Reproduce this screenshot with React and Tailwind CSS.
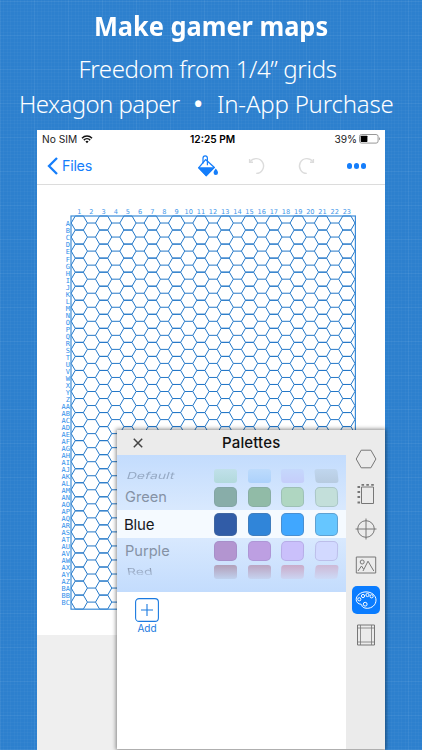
import clsx from 'clsx';

const COLS = 23;
const ROWS = 28;
const HEX_H = 14.04;
const SIDE = 8.107;
const STEP = SIDE * 1.5;

// Labels run A..Z, AA..AZ, BA..BC
const rowLabels = Array.from({ length: 55 }, (_, i) => {
  const last = String.fromCharCode(65 + (i % 26));
  return i < 26 ? last : String.fromCharCode(64 + Math.floor(i / 26)) + last;
});

const rows = [
  {
    name: 'Default',
    row: 'h-[14px] mt-[14px]',
    text: 'text-[14px] pl-[10px] text-[#8093ad] opacity-70 scale-y-[0.68] -skew-x-12',
    swatch: 'h-[14px] rounded-[3px]',
    colors: ['bg-linear-to-b from-[#c0e0ea] to-[#b2d9dc]', 'bg-linear-to-b from-[#bddbfc] to-[#acd1fb]', 'bg-linear-to-b from-[#c5d8fc] to-[#c5cdfa] skew-x-3', 'bg-linear-to-b from-[#c0d6ee] to-[#b7cbe0] skew-x-6'],
  },
  {
    name: 'Green',
    row: 'h-[20px] mt-[4px] mb-[3px]',
    text: 'text-[14.6px] pl-[8px] text-[#8592a5]',
    swatch: 'h-[20px] rounded-[5px] border border-[#7a99a0]/35',
    colors: ['bg-[#88ada9]', 'bg-[#91bba7]', 'bg-[#afd6c1] skew-x-1', 'bg-[#c3dfda] skew-x-2'],
  },
  {
    name: 'Blue',
    row: 'h-[28px] bg-[#f5faff]',
    text: 'text-[15px] pl-[7px] tracking-[-0.2px] text-[#15181c]',
    swatch: 'h-[23px] rounded-[5px] border border-[#55749c]/45',
    colors: ['bg-[#315ca7]', 'bg-[#3085d9]', 'bg-[#40a7ff]', 'bg-[#66c6ff]'],
  },
  {
    name: 'Purple',
    row: 'h-[20px] mt-[3px] mb-[4px]',
    text: 'text-[14.6px] pl-[8px] text-[#8592a5]',
    swatch: 'h-[20px] rounded-[5px] border border-[#8a82b8]/30',
    colors: ['bg-[#b395d0]', 'bg-[#bd9fe2]', 'bg-[#cac0fb] -skew-x-1', 'bg-[#d2d9ff] -skew-x-2'],
  },
  {
    name: 'Red',
    row: 'h-[14px]',
    text: 'text-[14px] pl-[10px] text-transparent bg-linear-to-b from-[#8796ae] to-[#b4c8e4] bg-clip-text scale-y-[0.68] skew-x-6',
    swatch: 'h-[14px] rounded-[3px]',
    colors: ['bg-linear-to-b from-[#b29fb9] to-[#bfd1ee]', 'bg-linear-to-b from-[#bba5c2] to-[#c5d3f0]', 'bg-linear-to-b from-[#c9abc9] to-[#cbd5f3] -skew-x-3', 'bg-linear-to-b from-[#cdb9d6] to-[#ccdaf7] -skew-x-6'],
  },
];

function hexPath() {
  let d = '';
  for (let c = 0; c < COLS; c++) {
    const cx = SIDE + c * STEP;
    const odd = c % 2 === 1;
    const count = odd ? ROWS - 1 : ROWS;
    const top = odd ? HEX_H / 2 : 0;
    for (let r = 0; r < count; r++) {
      const y = top + r * HEX_H;
      const m = y + HEX_H / 2;
      const b = y + HEX_H;
      if (odd) {
        d += `M${cx - SIDE / 2} ${y}H${cx + SIDE / 2}`;
        if (r === count - 1) d += `M${cx - SIDE / 2} ${b}H${cx + SIDE / 2}`;
      } else {
        d += `M${cx - SIDE / 2} ${y}H${cx + SIDE / 2}L${cx + SIDE} ${m}L${cx + SIDE / 2} ${b}H${cx - SIDE / 2}L${cx - SIDE} ${m}Z`;
      }
    }
  }
  return d;
}

function HexMap() {
  return (
    <svg viewBox="37 185 348 450" className="block h-[450px] w-[348px]">
      <g fill="#3f97ea" fontFamily="'DejaVu Sans', sans-serif" fontSize="6.6" textAnchor="middle">
        {Array.from({ length: COLS }, (_, i) => (
          <text key={i} x={79.3 + i * STEP} y="214">{i + 1}</text>
        ))}
      </g>
      <g fill="#2f8eea" fontFamily="'DejaVu Sans Mono', monospace" fontSize="7" textAnchor="end">
        {rowLabels.map((label, i) => (
          <text key={label} x="70" y={226.4 + i * 7.02}>{label}</text>
        ))}
      </g>
      <g fill="none" stroke="#2478c8">
        <path d={hexPath()} transform="translate(71.2 216)" strokeWidth="1" />
        <rect x="71" y="216" width="284.4" height="393.2" stroke="#3c8cd8" strokeWidth="1.2" />
      </g>
    </svg>
  );
}

function StatusBar() {
  return (
    <div className="flex h-[18px] items-center pt-px pl-[5px] pr-[4px] text-[10.2px] text-[#1b1b1b]">
      <div className="flex w-[148px] items-center gap-[4px]">
        <span>No SIM</span>
        <svg viewBox="0 0 12 9" className="h-[9px] w-[12px]" fill="none" stroke="#111" strokeWidth="1.5">
          <path d="M1 3.2C3.8.4 8.2.4 11 3.2" />
          <path d="M2.8 5.1c1.8-1.8 4.6-1.8 6.4 0" />
          <path d="M4.4 6.6 6 8.3l1.6-1.7a2.3 2.3 0 0 0-3.2 0Z" fill="#111" stroke="none" />
        </svg>
      </div>
      <span className="w-[48px] whitespace-nowrap font-semibold text-black">12:25 PM</span>
      <div className="ml-auto flex items-center gap-[2px]">
        <span>39%</span>
        <svg viewBox="0 0 22 10" className="h-[10px] w-[22px]">
          <rect x=".5" y=".5" width="18.6" height="8.6" rx="2" fill="#fff" stroke="#8c8c8c" strokeWidth=".9" />
          <rect x="1.7" y="1.7" width="6.7" height="6.2" rx=".6" fill="#000" />
          <path d="M20.2 3.3c1.2.3 1.2 2.7 0 3Z" fill="#8c8c8c" />
        </svg>
      </div>
    </div>
  );
}

function NavBar() {
  return (
    <div className="flex h-[37px] items-center border-b border-[#dcdcdc] pl-[10px] pr-[19px]">
      <div className="flex w-[150px] items-center gap-[4px] text-[14.3px] text-[#157efb]">
        <svg viewBox="0 0 11 18" className="h-[18px] w-[11px]" fill="none" stroke="#157efb" strokeWidth="2.3">
          <path d="M10 1 2 9l8 8" />
        </svg>
        <span className="tracking-[-0.25px]">Files</span>
      </div>
      <svg viewBox="0 0 22 22" className="h-[22px] w-[22px]" fill="#157efb">
        <path d="M8.6 4.6 17.4 12.4 9.2 20.6 1.6 12.8Z" fill="#fff" stroke="#157efb" strokeWidth="1.3" strokeLinejoin="round" />
        <path d="M1 12.2h17l-8.8 9.3Z" />
        <path d="M6 8.5V3.2c0-3.2 4.4-3.2 4.4 0v7" fill="none" stroke="#157efb" strokeWidth="1.2" />
        <path d="M18.8 13.4c1.4 1.9 2.2 3 2.2 4.300a2.200 2.200 0 0 1-4.400 0c0-1.300.8-2.400 2.200-4.300Z" />
      </svg>
      {/* undo / redo */}
      <svg viewBox="0 0 18 18" className="ml-[29px] h-[18px] w-[18px]" fill="none" stroke="#dcdcdc" strokeWidth="1.4">
        <path d="M2.2 4.6A7.4 7.4 0 1 1 8.2 16.4" />
        <path d="M1.6 2v3.2h3.4" />
      </svg>
      <svg viewBox="0 0 18 18" className="ml-[31px] h-[18px] w-[18px]" fill="none" stroke="#dcdcdc" strokeWidth="1.4">
        <path d="M15.8 4.6A7.4 7.4 0 1 0 9.8 16.4" />
        <path d="M16.4 2v3.2h-3.4" />
      </svg>
      <div className="ml-auto flex gap-[1.5px]">
        <span className="size-[5.3px] rounded-full bg-[#157efb]" />
        <span className="size-[5.3px] rounded-full bg-[#157efb]" />
        <span className="size-[5.3px] rounded-full bg-[#157efb]" />
      </div>
    </div>
  );
}

function Picker() {
  return (
    <div className="flex h-[137px] flex-col overflow-hidden bg-linear-to-b from-[#c3dcfd] via-[#deecfe] to-[#c3dcfd]">
      {rows.map((r) => (
        <div key={r.name} className={clsx('flex shrink-0 items-center', r.row)}>
          <span className={clsx('w-[97px] leading-none', r.text)}>{r.name}</span>
          <div className="flex gap-[10.5px]">
            {r.colors.map((c) => (
              <span key={c} className={clsx('w-[23px]', r.swatch, c)} />
            ))}
          </div>
        </div>
      ))}
    </div>
  );
}

function ToolRail() {
  const icon = 'size-[22px]';
  return (
    <div className="flex w-[39px] flex-col items-center gap-[7.2px] bg-[#ebebeb] pt-[15px]">
      {[
        <svg key="hex" viewBox="0 0 22 22" className={icon}>
          <path d="M1.2 11 6.2 2.2h9.7l5 8.8-5 8.8H6.2Z" />
        </svg>,
        <svg key="edges" viewBox="0 0 22 22" className={icon}>
          <path d="M6.5 4h12v16.5h-12Z" />
          <path d="M6.5 1.8h2.6M11.3 1.8h2.6M16.2 1.8h2.6M2.5 4h2.6M2.5 9h2.6M2.5 14h2.6M2.5 19.5h2.6" strokeWidth="1.8" />
        </svg>,
        <svg key="target" viewBox="0 0 22 22" className={icon}>
          <circle cx="11" cy="11" r="8.3" />
          <path d="M.5 11h21M11 .5v21" />
        </svg>,
        <svg key="image" viewBox="0 0 22 22" className={icon}>
          <path d="M1.3 3h19.4v16H1.3Z" />
          <circle cx="7.2" cy="8" r="2" />
          <path d="m3 17 3.5-5 2 3M8 17l5-9.8 5.8 9.8" />
        </svg>,
        <svg key="palette" viewBox="0 0 22 22" className={icon}>
          <path d="M6.2 15.3c-3-.2-5-2.2-5-4.8 0-4 4.4-7.6 9.8-7.6 5.6 0 10 3.4 10 8.2 0 4.7-4 8.2-8.8 8.2-3.4 0-5.6-1.6-5.5-3.5Z" />
          <circle cx="4.3" cy="10.3" r="1.6" />
          <circle cx="8" cy="7" r="1.6" />
          <circle cx="12.5" cy="6" r="1.6" />
          <circle cx="16.6" cy="7.3" r="1.6" />
          <circle cx="10.2" cy="15.2" r="1.9" />
        </svg>,
        <svg key="margins" viewBox="0 0 22 22" className={icon}>
          <path d="M2.5 1h17v20h-17Z" />
          <path d="M5.5 1v20M16.5 1v20M2.5 4h17M2.5 18h17" strokeWidth=".8" />
        </svg>,
      ].map((item, i) => (
        <div
          key={item.key}
          className={clsx(
            'flex size-[28px] items-center justify-center rounded-[5px] fill-none',
            i === 4 ? 'bg-[#0a7cff] stroke-white' : 'stroke-[#777]'
          )}
        >
          {item}
        </div>
      ))}
    </div>
  );
}

export default function App() {
  return (
    <div className="flex h-[750px] w-[422px] flex-col items-center overflow-hidden bg-[#2d80ce] bg-[repeating-linear-gradient(0deg,rgba(255,255,255,0.025)_0_1px,transparent_1px_3.4px),repeating-linear-gradient(90deg,rgba(255,255,255,0.025)_0_1px,transparent_1px_3.4px),repeating-linear-gradient(0deg,rgba(255,255,255,0.04)_0_1px,transparent_1px_34px),repeating-linear-gradient(90deg,rgba(255,255,255,0.04)_0_1px,transparent_1px_34px)] font-['Inter','Liberation_Sans',sans-serif]">
      <div className="flex h-[130px] w-full shrink-0 flex-col items-center whitespace-nowrap pt-[7px] font-['Noto_Sans',sans-serif] text-white">
        <h1 className="scale-x-[0.922] text-[27.5px] leading-[37px] font-bold">Make gamer maps</h1>
        <p className="mt-[7px] pr-[7px] text-[24px] leading-[35px] font-light tracking-[-0.37px]">Freedom from 1/4” grids</p>
        <p className="flex w-full pl-[19px] text-[24px] leading-[35px] font-light">
          <span className="w-[175px] tracking-[-0.6px]">Hexagon paper</span>
          <span className="w-[23px] text-[22px] font-bold">•</span>
          <span className="tracking-[-0.2px]">In-App Purchase</span>
        </p>
      </div>

      <div className="relative h-[620px] w-[348px] shrink-0 bg-white">
        <StatusBar />
        <NavBar />
        <HexMap />
        <div className="h-[115px] bg-[#efefef]" />

        {/* Palette popover */}
        <div className="absolute right-0 bottom-px flex h-[319px] w-[268px] bg-white shadow-[0_0_4px_1px_rgba(0,0,0,0.45)]">
          <div className="flex w-[229px] flex-col">
            <div className="flex h-[25px] shrink-0 items-center bg-[#ebebeb] pt-px pl-[16px]">
              <svg viewBox="0 0 10 10" className="size-[10px]" stroke="#444" strokeWidth="1.5">
                <path d="m.8.8 8.4 8.4M9.2.8.8 9.2" />
              </svg>
              <span className="ml-[79px] text-[15px] font-medium tracking-[0.15px] text-[#111]">Palettes</span>
            </div>
            <Picker />
            <div className="ml-[18px] flex w-[24px] flex-col items-center pt-[6px] text-[#1a7ae0]">
              <svg viewBox="0 0 24 24" className="size-[24px]" fill="none" stroke="currentColor" strokeWidth="1.1">
                <rect x=".6" y=".6" width="22.8" height="22.8" rx="3.5" />
                <path d="M12 6v12M6 12h12" />
              </svg>
              <span className="text-[10px] leading-[13px]">Add</span>
            </div>
          </div>
          <ToolRail />
        </div>
      </div>
    </div>
  );
}
